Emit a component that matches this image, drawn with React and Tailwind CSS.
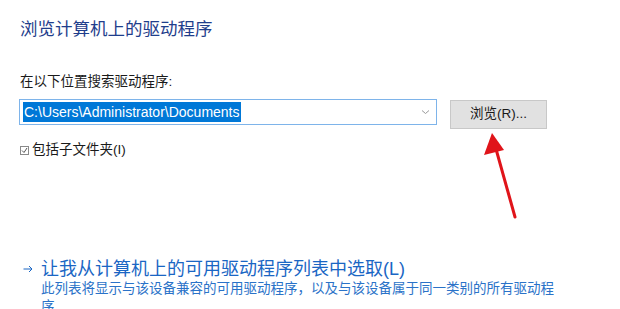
const cjk = { fontFamily: '"Liberation Sans", "Noto Sans CJK SC", sans-serif' };

const RedArrow = () => (
  <svg
    className="absolute left-[470px] top-[125px] pointer-events-none"
    width="60"
    height="100"
    viewBox="0 0 60 100"
  >
    <line x1="45" y1="92" x2="26" y2="24" stroke="#e0141a" strokeWidth="3" strokeLinecap="round" />
    <polygon points="22,8 14,30 34,25" fill="#e0141a" />
  </svg>
);

export default function App() {
  return (
    <div
      className="relative w-[620px] h-[309px] overflow-hidden bg-white text-[#1a1a1a]"
      style={cjk}
    >
      <div className="pl-[20px] pt-[17px]">
        {/* Title */}
        <h1 className="text-[17.5px] leading-[24px] text-[#1f3e8c]">浏览计算机上的驱动程序</h1>

        {/* Search location */}
        <p className="mt-[32px] text-[13.5px] leading-[18px]">在以下位置搜索驱动程序:</p>

        <div className="mt-[8px] flex items-start">
          <div className="w-[418px] h-[26px] -ml-[1px] border border-[#7eb4ea] bg-white flex items-center pl-[3px] pr-[6px]">
            <span className="bg-[#0078d7] text-white text-[14px] leading-[20px] px-[1px]">
              C:\Users\Administrator\Documents
            </span>
            <svg className="ml-auto" width="9" height="6" viewBox="0 0 9 6">
              <path d="M1 1.5 L4.5 4.5 L8 1.5" fill="none" stroke="#9a9a9a" strokeWidth="1" />
            </svg>
          </div>
          <button className="ml-[13px] mt-[1px] w-[97px] h-[29px] bg-[#e1e1e1] border border-[#c8c8c8] text-[13.5px] text-[#1a1a1a]">
            浏览(R)...
          </button>
        </div>

        <label className="mt-[12px] flex items-center text-[13.5px] leading-[18px]">
          <span className="w-[9px] h-[9px] border border-[#8a8a8a] flex items-center justify-center mr-[3px]">
            <svg width="7" height="7" viewBox="0 0 7 7">
              <path d="M1 3.5 L3 5.5 L6 1" fill="none" stroke="#555" strokeWidth="1" />
            </svg>
          </span>
          包括子文件夹(I)
        </label>

        {/* Pick from list */}
        <div className="mt-[99px] flex items-start">
          <span className="w-[21px] h-[22px] pl-[3px] flex items-center text-[#1a66c4]">
            <svg width="10" height="8" viewBox="0 0 10 8">
              <path d="M0.5 4 H9 M6 1 L9 4 L6 7" fill="none" stroke="#1a66c4" strokeWidth="1" />
            </svg>
          </span>
          <div className="w-[522px]">
            <p className="text-[18px] leading-[22px] text-[#1a66c4]">让我从计算机上的可用驱动程序列表中选取(L)</p>
            <p className="text-[13.5px] leading-[18px] text-[#2a72c8]">
              此列表将显示与该设备兼容的可用驱动程序，以及与该设备属于同一类别的所有驱动程序
            </p>
          </div>
        </div>
      </div>

      <RedArrow />
    </div>
  );
}
